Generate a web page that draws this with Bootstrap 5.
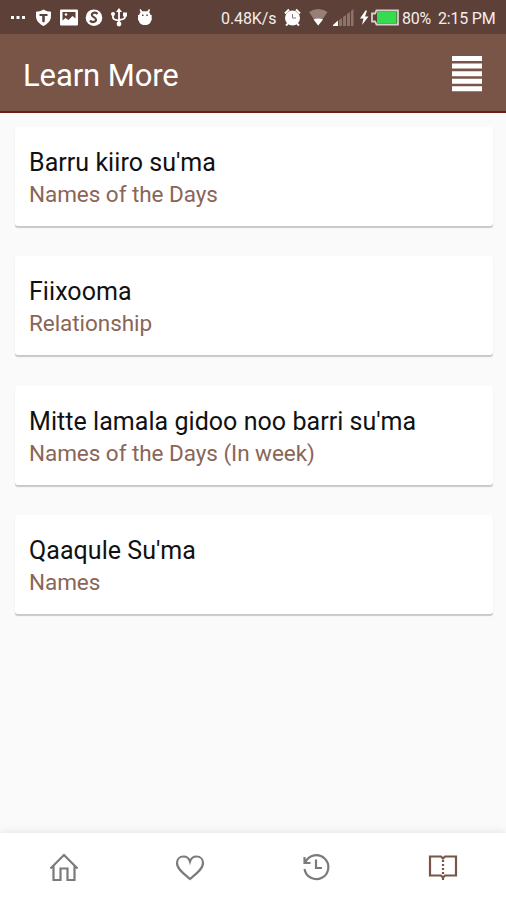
<!DOCTYPE html>
<html lang="en">
<head>
<meta charset="utf-8">
<meta name="viewport" content="width=device-width, initial-scale=1">
<title>Learn More</title>
<link rel="stylesheet" href="https://cdn.jsdelivr.net/npm/bootstrap@5.3.0/dist/css/bootstrap.min.css">
<style>
body{font-family:Roboto,"Liberation Sans",sans-serif;background:#fafafa;color:#111}
svg{display:block;flex:none}
.screen{height:900px;overflow:hidden}
.status-bar{height:34px;background:#5d4037;color:#f3eeec;font-size:16px;line-height:34px;padding-left:10px;padding-top:3px;font-weight:400}
.status-bar span{white-space:nowrap;flex:none}
.status-bar svg{margin-top:-2px}
.net-speed{margin-left:69px;width:63px;letter-spacing:-.1px}
.charge{margin-left:3px;width:36px;letter-spacing:-.2px}
.clock{letter-spacing:-.2px}
.app-bar{height:79px;background:#795548;border-bottom:2px solid #6d1b17;padding:4px 24px 0 23px;color:#fff}
.app-title{font-size:31px;line-height:40px;font-weight:400;letter-spacing:-.1px;padding-top:3px}
.menu-icon{margin-top:-1px}
.topics{padding:14px 13px 0 15px;gap:30.4px}
.topic{height:99px;border:0;border-radius:3px;background:#fff;box-shadow:0 1.500px 1px rgba(0,0,0,.2);padding:19px 14px 0}
.topic-name{font-size:25px;line-height:33px;font-weight:400;letter-spacing:.05px}
.topic-note{font-size:22.5px;line-height:31px;color:#8a6558;letter-spacing:-.05px}
.tabs{height:67px;background:#fff;box-shadow:0 -1px 8px rgba(0,0,0,.09)}
.tabs .nav-item{flex:1 1 0;color:#7b7b7b}
.tabs .nav-item.active{color:#795548}
.home-icon{margin-left:2px}
</style>
</head>
<body>
<div class="screen d-flex flex-column">
<div class="status-bar d-flex align-items-center">
  <svg width="142" height="22" viewBox="10 7 142 22" fill="#fff">
    <path d="M11 16h3v3h-3zM16.500 16h3v3h-3zM22 16h3v3h-3z"/>
    <path d="M43.500 9.500c2.500 1.800 5 2 7.500 2.200v4.500c0 4.300-3.300 7.500-7.500 9.800-4.200-2.300-7.500-5.500-7.500-9.800v-4.500c2.500-.2 5-.4 7.500-2.200z"/>
    <path d="M39.500 14h8v2h-2.700v5.500l-1.300 1-1.300-1v-5.500h-2.700z" fill="#5d4037"/>
    <rect x="60" y="9.500" width="18" height="16" rx="1"/>
    <path d="M62.500 12h13v6.500l-3-2.500-4 4-3-2-3 2.500z" fill="#5d4037"/><circle cx="66" cy="14.500" r="1.300"/>
    <circle cx="94" cy="17.700" r="8.300"/>
    <path d="M97.500 14c-1.800-2.600-6.300-1.200-5.500 1.500.5 1.500 4 2 4 4 0 2.700-4 3.500-6 1" fill="none" stroke="#5d4037" stroke-width="2.200"/>
    <path d="M119 11v12M113 14v3.500c0 1.800 2 2.500 6 3M125 14v3c0 1.800-2 2.500-6 3" fill="none" stroke="#fff" stroke-width="1.800"/>
    <path d="M116 12l3-4 3 4zM123 12.500h4v4h-4z"/><circle cx="113" cy="14" r="2"/><circle cx="119" cy="24" r="2.400"/>
    <path d="M140.500 9l1.800 2.200h5L149 9l1 .8-.8 2.700q1.300 1 1.300 2.500h1.200v5.500h-1.200q-.5 4.300-5.700 4.300t-5.700-4.300H138V15h1.200q0-1.500 1.300-2.500L139.600 9.800z"/>
    <path d="M139 15h12v6q-1 4-6 4t-6-4z"/>
    <path d="M142 14.500h1.500v1.500H142zM146.300 14.500h1.500v1.500h-1.500z" fill="#5d4037"/>
  </svg>
  <span class="net-speed">0.48K/s</span>
  <svg width="115" height="22" viewBox="284 7 115 22" fill="#fff">
    <circle cx="292.500" cy="18" r="7.500"/><path d="M285 13.500l4-4M300 13.500l-4-4M288 23.500l-2 2M297 23.500l2 2" stroke="#fff" stroke-width="2"/>
    <path d="M292.500 14v4h3.500" fill="none" stroke="#8b7770" stroke-width="1"/>
    <path d="M309 12q9.500-6 18.500 0L318.200 25.500z" fill="#957f78"/><path d="M313.500 19.500q4.700-2 9.500 0L318.200 25.500z"/>
    <path d="M333 26v-1l5-4.500V26z"/><path d="M339 20l3-2v8h-3zM343 17l3-2v11h-3zM347 14l3-2v14h-3zM351 11l2.500-2v17H351z" fill="#8c746d"/>
    <path d="M365.500 10.500l-5.500 8h3.500l-1.500 6.500 6.500-8.500H365l2-6z"/>
    <path d="M376.500 10.500H398v14h-21.500l-1.500-3h-3v-8h3z" fill="#5d4037" stroke="#d9cfcb" stroke-width="1.800"/><path d="M377 12h19.500v11H377z" fill="#36dc50"/>
  </svg>
  <span class="charge">80%</span><span class="clock">2:15 PM</span>
</div>
<header class="app-bar d-flex align-items-center justify-content-between">
  <h1 class="app-title mb-0">Learn More</h1>
  <svg class="menu-icon" width="30" height="36" viewBox="0 0 30 36" fill="#fff" role="img" aria-label="Menu"><path d="M0 0h30v5H0zM0 7.600h30v5H0zM0 15.200h30v5H0zM0 22.700h30v5H0zM0 30.200h30v5H0z"/></svg>
</header>
<main class="topics d-flex flex-column flex-grow-1">
  <article class="topic card"><div class="topic-name"><span>Barru kiiro su'ma</span></div><div class="topic-note"><span>Names of the Days</span></div></article>
  <article class="topic card"><div class="topic-name"><span>Fiixooma</span></div><div class="topic-note"><span>Relationship</span></div></article>
  <article class="topic card"><div class="topic-name"><span>Mitte lamala gidoo noo barri su'ma</span></div><div class="topic-note"><span>Names of the Days (In week)</span></div></article>
  <article class="topic card"><div class="topic-name"><span>Qaaqule Su'ma</span></div><div class="topic-note"><span>Names</span></div></article>
</main>
<nav class="tabs nav nav-fill flex-nowrap align-items-center">
  <a class="nav-item d-flex justify-content-center" href="#" aria-label="Home"><svg class="home-icon" width="30" height="30" viewBox="0 0 30 30" fill="none" stroke="currentColor" stroke-width="2.200"><path d="M1.500 16.500L15 3l13.500 13.500M4.500 14v14h7V16.500h7V28h7V14"/></svg></a>
  <a class="nav-item d-flex justify-content-center" href="#" aria-label="Favourites"><svg width="30" height="30" viewBox="0 0 30 30" fill="none" stroke="currentColor" stroke-width="2.200"><path d="M15 27C9 22 2 17 2 11 2 7.500 4.500 4.500 8.500 4.500c3 0 5.500 1.800 6.500 5 1-3.200 3.500-5 6.500-5 4 0 6.500 3 6.500 6.500 0 6-7 11-13 16z"/></svg></a>
  <a class="nav-item d-flex justify-content-center" href="#" aria-label="History"><svg width="30" height="30" viewBox="0 0 30 30" fill="none" stroke="currentColor" stroke-width="2.200"><path d="M4.500 10A12 12 0 1 1 3.500 17M3.500 5v6h6M15 7.500v8.500h6"/></svg></a>
  <a class="nav-item d-flex justify-content-center active" href="#" aria-label="Learn more"><svg width="30" height="30" viewBox="0 0 30 30" fill="none" stroke="currentColor" stroke-width="2.200"><path d="M15 6.500L13 4.500H2v19h11l2 2 2-2h11v-19H17zM15 25v3"/><path d="M15 8v15" stroke-dasharray="2 2"/></svg></a>
</nav>
</div>
<script src="https://cdn.jsdelivr.net/npm/bootstrap@5.3.0/dist/js/bootstrap.bundle.min.js"></script>
</body>
</html>
